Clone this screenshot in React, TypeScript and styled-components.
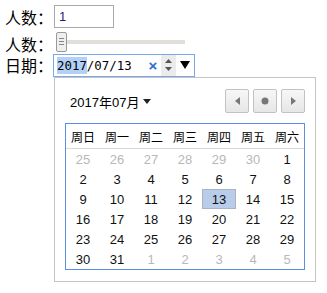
import React from "react";
import styled, { createGlobalStyle } from "styled-components";

const Global = createGlobalStyle`
  html, body { margin: 0; padding: 0; background: #fff; }
  body { font-family: "Liberation Sans", "Noto Sans CJK SC", sans-serif; color: #000; }
`;

const Page = styled.div`
  padding: 5px 0 0 5px;
  display: flex;
  flex-direction: column;
  align-items: flex-start;
`;

const Row = styled.div<{ $h: number; $align?: string }>`
  display: flex;
  align-items: ${(p) => p.$align || "center"};
  height: ${(p) => p.$h}px;
`;

const Label = styled.span<{ $drop?: number }>`
  font-family: "Noto Sans CJK SC", sans-serif;
  font-size: 16px;
  line-height: 16px;
  width: 48px;
  flex: none;
  margin-bottom: ${(p) => p.$drop || 0}px;
`;

const NumberBox = styled.div`
  width: 60px;
  height: 23px;
  box-sizing: border-box;
  border: 1px solid #a9a9a9;
  font-size: 13px;
  color: #2a1a7a;
  display: flex;
  align-items: center;
  padding-left: 4px;
  margin-left: 1px;
`;

const Slider = styled.div`
  display: flex;
  align-items: center;
  height: 21px;
  margin-left: 3px;
  margin-bottom: 1px;
`;

const Thumb = styled.div`
  width: 11px;
  height: 20px;
  box-sizing: border-box;
  border: 1px solid #9a9a9a;
  border-radius: 2px;
  background: #efefef;
  display: flex;
  flex-direction: column;
  justify-content: center;
  align-items: center;
  gap: 2px;
`;

const Grip = styled.span`
  width: 5px;
  height: 1px;
  background: #888;
`;

const Track = styled.div`
  width: 118px;
  height: 4px;
  background: #e2dfda;
`;

const DateBox = styled.div`
  width: 142px;
  height: 23px;
  box-sizing: border-box;
  border: 1px solid #7aa7e6;
  display: flex;
  align-items: center;
  font-family: "DejaVu Sans Mono", monospace;
  font-size: 12.4px;
  padding-left: 3px;
`;

const Sel = styled.span`
  background: #b3d0f7;
  line-height: 17px;
`;

const Clear = styled.span`
  margin-left: auto;
  font-family: "Liberation Sans", sans-serif;
  color: #2f6ad2;
  font-weight: bold;
  font-size: 15px;
  line-height: 15px;
  width: 10px;
  text-align: center;
`;

const Spin = styled.div`
  width: 15px;
  height: 21px;
  background: #ebebeb;
  margin-left: 3px;
  display: flex;
  align-items: center;
  justify-content: center;
`;

const Drop = styled.span`
  width: 18px;
  display: flex;
  justify-content: center;
`;

const Popup = styled.div`
  margin-left: 49px;
  width: 262px;
  box-sizing: border-box;
  border: 1px solid #c4c4c4;
  background: #fff;
  padding: 11px 10px 11px 10px;
`;

const Head = styled.div`
  display: flex;
  align-items: center;
  height: 24px;
  margin-bottom: 10px;
`;

const Title = styled.span`
  font-family: "Liberation Sans", "Noto Sans CJK SC", sans-serif;
  font-size: 13px;
  margin-left: 5px;
  display: flex;
  align-items: center;
  gap: 4px;
`;

const Buttons = styled.div`
  margin-left: auto;
  display: flex;
  gap: 4px;
`;

const NavBtn = styled.div`
  width: 24px;
  height: 24px;
  box-sizing: border-box;
  border: 1px solid #c2c2c2;
  border-radius: 2px;
  background: linear-gradient(#f7f7f7, #e6e6e6);
  display: flex;
  align-items: center;
  justify-content: center;
`;

const Table = styled.div`
  border: 1px solid #5b8fe0;
  display: grid;
  grid-template-columns: repeat(7, 34px);
`;

const HeadCell = styled.div`
  height: 24px;
  border-bottom: 1px solid #d8d8d8;
  display: flex;
  align-items: center;
  justify-content: center;
  font-family: "Noto Sans CJK SC", sans-serif;
  font-size: 12px;
`;

const DayCell = styled.div<{ $muted?: boolean; $sel?: boolean }>`
  height: 20px;
  display: flex;
  align-items: center;
  justify-content: center;
  font-size: 13px;
  color: ${(p) => (p.$muted ? "#b8b8b8" : "#111")};
  ${(p) =>
    p.$sel ? `background:#b9cdea; box-shadow: inset 0 0 0 1px #a8b3c4;` : ""}
`;

const weeks = ["周日", "周一", "周二", "周三", "周四", "周五", "周六"];
const days: { d: number; m?: boolean }[] = [
  ...[25, 26, 27, 28, 29, 30].map((d) => ({ d, m: true })),
  ...Array.from({ length: 31 }, (_, i) => ({ d: i + 1 })),
  ...[1, 2, 3, 4, 5].map((d) => ({ d, m: true })),
];

export default function App() {
  return (
    <>
      <Global />
      <Page>
        <Row $h={23}>
          <Label>人数：</Label>
          <NumberBox>1</NumberBox>
        </Row>
        <Row $h={25} $align="flex-end">
          <Label $drop={1}>人数：</Label>
          <Slider>
            <Thumb>
              <Grip />
              <Grip />
              <Grip />
            </Thumb>
            <Track />
          </Slider>
        </Row>
        <Row $h={24}>
          <Label>日期：</Label>
          <DateBox>
            <Sel>2017</Sel>/07/13
            <Clear>×</Clear>
            <Spin>
              <svg width="9" height="14" viewBox="0 0 9 14">
                <path d="M4.5 1 L8 5 L1 5 Z" fill="#555" />
                <path d="M4.5 13 L8 9 L1 9 Z" fill="#555" />
              </svg>
            </Spin>
            <Drop>
              <svg width="10" height="8" viewBox="0 0 10 8">
                <path d="M0 0 L10 0 L5 8 Z" fill="#000" />
              </svg>
            </Drop>
          </DateBox>
        </Row>
        <Popup>
          <Head>
            <Title>
              2017年07月
              <svg width="8" height="5" viewBox="0 0 8 5">
                <path d="M0 0 L8 0 L4 5 Z" fill="#222" />
              </svg>
            </Title>
            <Buttons>
              <NavBtn>
                <svg width="5" height="8" viewBox="0 0 5 8">
                  <path d="M5 0 L5 8 L0 4 Z" fill="#777" />
                </svg>
              </NavBtn>
              <NavBtn>
                <svg width="8" height="8" viewBox="0 0 8 8">
                  <circle cx="4" cy="4" r="3.5" fill="#777" />
                </svg>
              </NavBtn>
              <NavBtn>
                <svg width="5" height="8" viewBox="0 0 5 8">
                  <path d="M0 0 L0 8 L5 4 Z" fill="#777" />
                </svg>
              </NavBtn>
            </Buttons>
          </Head>
          <Table>
            {weeks.map((w) => (
              <HeadCell key={w}>{w}</HeadCell>
            ))}
            {days.map((x, i) => (
              <DayCell key={i} $muted={x.m} $sel={!x.m && x.d === 13}>
                {x.d}
              </DayCell>
            ))}
          </Table>
        </Popup>
      </Page>
    </>
  );
}
